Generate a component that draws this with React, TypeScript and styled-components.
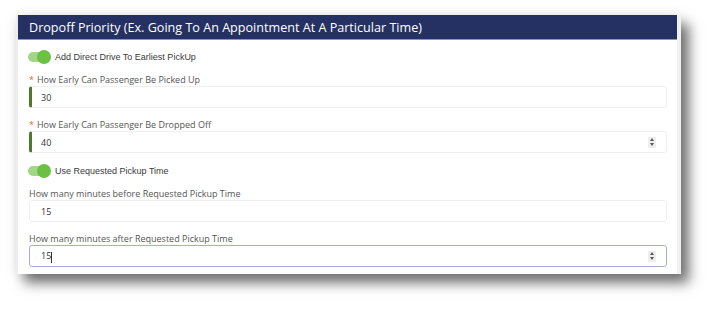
import React from "react";
import styled, { createGlobalStyle } from "styled-components";

const Global = createGlobalStyle`
  html, body { margin: 0; padding: 0; background: #ffffff; }
  body { width: 720px; height: 314px; overflow: hidden; }
`;

const Page = styled.div`
  padding: 15px 0 0 16px;
`;

const Frame = styled.div`
  width: 659px;
  border-left: 2px solid #ececec;
  border-right: 4px solid #f1f1f1;
  background: #fff;
  box-shadow: 8px 9px 12px rgba(0, 0, 0, 0.55), 0 0 12px rgba(0, 0, 0, 0.08);
`;

const Header = styled.div`
  height: 25px;
  background: #253163;
  border-bottom: 1px solid #8aa08c;
  box-sizing: border-box;
  display: flex;
  align-items: center;
  padding-left: 11px;
  color: #fff;
  font-family: "Open Sans", sans-serif;
  font-size: 12.6px;
`;

const Body = styled.div`
  padding: 9px 10px 7px 11px;
  display: flex;
  flex-direction: column;
`;

const ToggleRow = styled.div`
  display: flex;
  align-items: center;
  height: 14px;
  margin-top: 1px;
  margin-bottom: 9px;
  gap: 5px;
  margin-left: -1px;
`;

const Track = styled.div`
  position: relative;
  width: 22px;
  height: 10px;
  border-radius: 5px;
  background: #a3d686;
`;

const Knob = styled.div`
  position: absolute;
  right: -1px;
  top: -2px;
  width: 14px;
  height: 14px;
  border-radius: 50%;
  background: #6cc043;
`;

const ToggleLabel = styled.span`
  font-family: "Liberation Sans", Arial, sans-serif;
  font-size: 9px;
  color: #3a3a3a;
`;

const Label = styled.div`
  height: 12px;
  line-height: 13px;
  font-family: "Open Sans", sans-serif;
  font-size: 9px;
  color: #555;
`;

const Star = styled.span`
  color: #e4692f;
  margin-right: 3px;
`;

const Input = styled.div<{ $req?: boolean; $focus?: boolean; $last?: boolean }>`
  height: 22px;
  box-sizing: border-box;
  margin-top: 1px;
  border: 1px solid ${(p) => (p.$focus ? "#a7acd3" : "#efefef")};
  border-left: ${(p) => (p.$req ? "3px solid #4d7a2c" : p.$focus ? "1px solid #a7acd3" : "1px solid #efefef")};
  border-radius: 3px;
  display: flex;
  align-items: center;
  padding-left: ${(p) => (p.$req ? 9 : 11)}px;
  padding-right: 10px;
  font-family: "Open Sans", sans-serif;
  font-size: 9px;
  color: #333;
  margin-bottom: ${(p) => (p.$last ? 0 : 10)}px;
`;

const Value = styled.span`
  flex: 1;
`;

const Caret = styled.span`
  display: inline-block;
  width: 1px;
  height: 11px;
  background: #333;
  vertical-align: middle;
`;

const Spinner = styled.div`
  width: 8px;
  height: 11px;
  background: #eeeeee;
  display: flex;
  flex-direction: column;
  align-items: center;
  justify-content: center;
  gap: 2px;
`;

const Tri = styled.div<{ $down?: boolean }>`
  width: 0;
  height: 0;
  border-left: 2.5px solid transparent;
  border-right: 2.5px solid transparent;
  ${(p) => (p.$down ? "border-top: 3px solid #555;" : "border-bottom: 3px solid #555;")}
`;

const Spin = () => (
  <Spinner>
    <Tri />
    <Tri $down />
  </Spinner>
);

const Toggle = ({ label }: { label: string }) => (
  <ToggleRow>
    <Track>
      <Knob />
    </Track>
    <ToggleLabel>{label}</ToggleLabel>
  </ToggleRow>
);

export default function App() {
  return (
    <>
      <Global />
      <Page>
        <Frame>
          <Header>Dropoff Priority (Ex. Going To An Appointment At A Particular Time)</Header>
          <Body>
            <Toggle label="Add Direct Drive To Earliest PickUp" />
            <Label>
              <Star>*</Star>How Early Can Passenger Be Picked Up
            </Label>
            <Input $req>
              <Value>30</Value>
            </Input>
            <Label>
              <Star>*</Star>How Early Can Passenger Be Dropped Off
            </Label>
            <Input $req>
              <Value>40</Value>
              <Spin />
            </Input>
            <Toggle label="Use Requested Pickup Time" />
            <Label>How many minutes before Requested Pickup Time</Label>
            <Input>
              <Value>15</Value>
            </Input>
            <Label>How many minutes after Requested Pickup Time</Label>
            <Input $focus $last>
              <Value>
                15<Caret />
              </Value>
              <Spin />
            </Input>
          </Body>
        </Frame>
      </Page>
    </>
  );
}
